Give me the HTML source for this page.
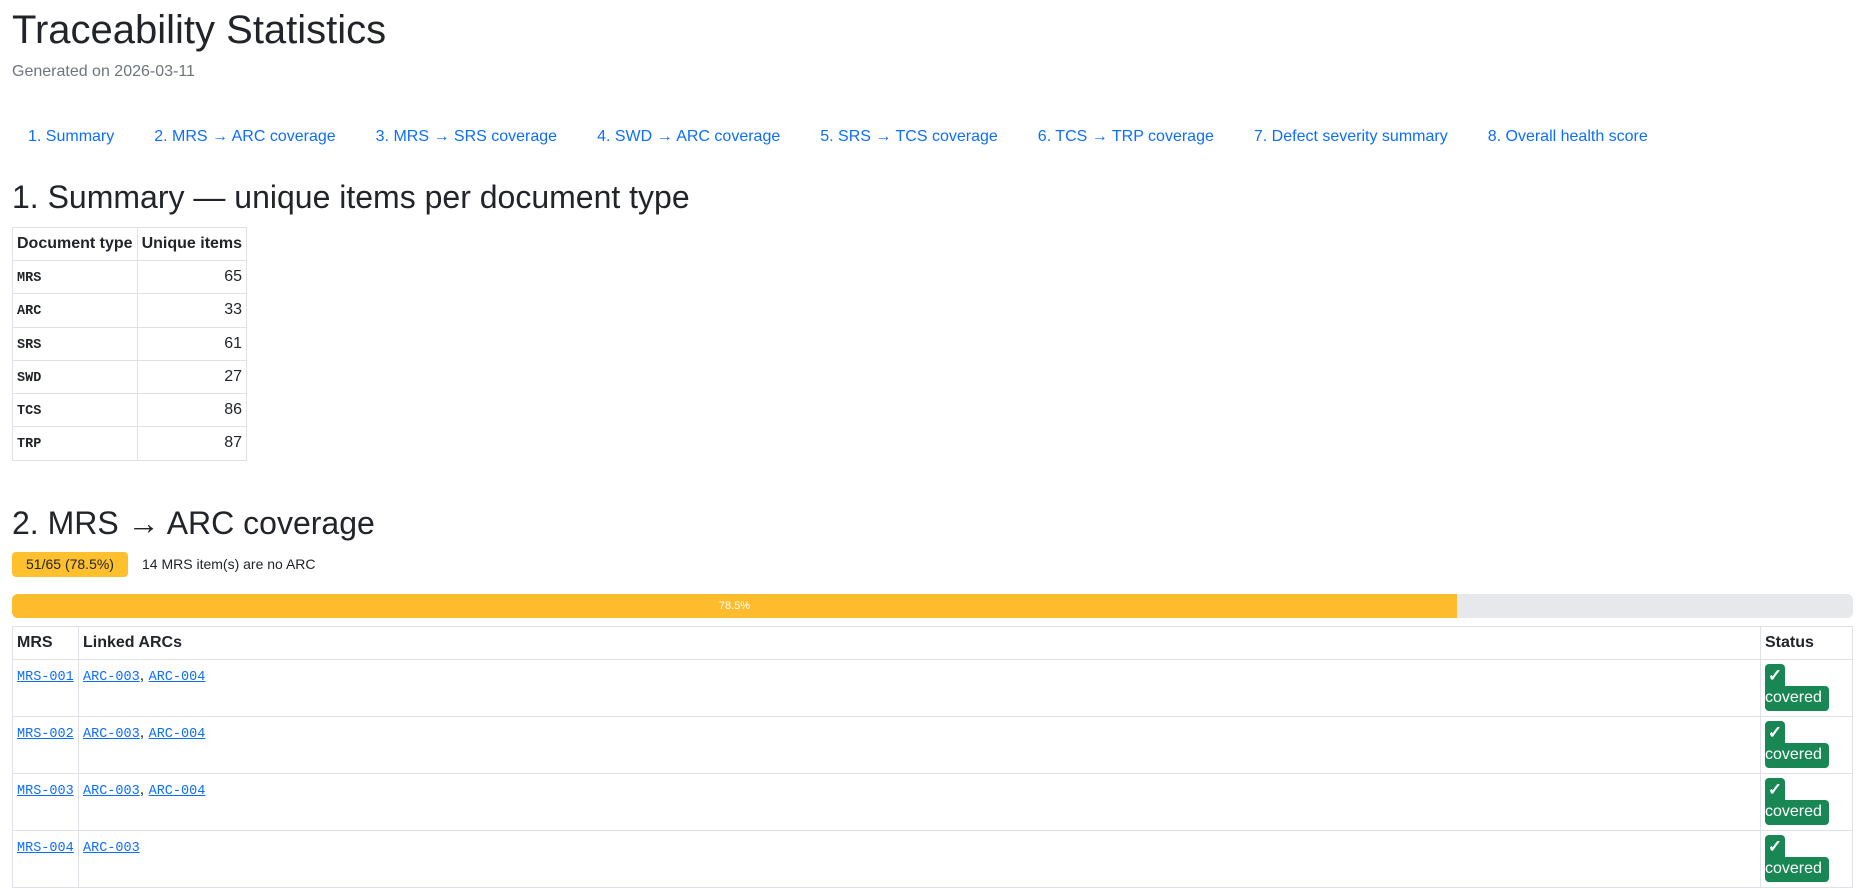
<!DOCTYPE html>
<html><head><meta charset="utf-8"><style>
*{box-sizing:border-box}
body{margin:0;font-family:"Liberation Sans",Helvetica,Arial,sans-serif;font-size:16px;color:#212529;background:#fff;line-height:1.5;overflow:hidden;width:1863px;height:875px}
h1{font-size:40px;font-weight:400;margin:0;position:absolute;top:6px;left:12px;line-height:48px}
.gen{position:absolute;top:60px;left:12px;color:#6c757d}
a{color:#0d6efd;text-decoration:none}
.nav{position:absolute;top:125px;left:12px;display:flex;white-space:nowrap}
.nav a{padding:0 24px 0 16px;line-height:24px}
h2{font-size:32px;font-weight:400;margin:0;line-height:38px;position:absolute;left:12px}
table{border-collapse:collapse;position:absolute;left:12px}
td,th{border:1px solid #dee2e6;padding:4px;text-align:left;vertical-align:top;white-space:nowrap}
code{font-family:"Liberation Mono",monospace;font-size:13.5px}
.t1 code{font-weight:bold;color:#212529}
.t1 td,.t1 th{height:33px}
.t1 th{height:31px}
.t2 td{height:57px}
.t2 th{height:33px}
.t2 a{text-decoration:underline}
.badge{position:absolute;left:12px;top:552px;width:116px;height:25px;background:#ffc02e;border-radius:4px;font-size:14px;line-height:25px;text-align:center}
.note{position:absolute;left:142px;top:552px;font-size:14px;line-height:25px}
.prog{position:absolute;left:12px;top:594px;width:1841px;height:24px;background:#e6e8eb;border-radius:6px;overflow:hidden}
.fill{width:1445px;height:24px;background:#fdbb2e;color:#fff;font-size:11px;text-align:center;line-height:24px}
.ck{display:block;width:20px;height:25px;background:#198754;color:#fff;border-radius:4px 4px 0 0;text-align:center;line-height:24px;font-size:17px;font-weight:bold}
.cv{display:block;width:64px;height:25px;background:#198754;color:#fff;border-radius:0 4px 4px 4px;line-height:24px;margin-top:-3px}
</style></head><body>
<h1>Traceability Statistics</h1>
<div class="gen">Generated on 2026-03-11</div>
<div class="nav"><a>1. Summary</a><a>2. MRS → ARC coverage</a><a>3. MRS → SRS coverage</a><a>4. SWD → ARC coverage</a><a>5. SRS → TCS coverage</a><a>6. TCS → TRP coverage</a><a>7. Defect severity summary</a><a>8. Overall health score</a></div>
<h2 style="top:178px">1. Summary — unique items per document type</h2>
<table class="t1" style="top:227px;width:235px">
<tr><th style="width:126px">Document type</th><th>Unique items</th></tr>
<tr><td><code>MRS</code></td><td style="text-align:right">65</td></tr>
<tr><td><code>ARC</code></td><td style="text-align:right">33</td></tr>
<tr><td><code>SRS</code></td><td style="text-align:right">61</td></tr>
<tr><td><code>SWD</code></td><td style="text-align:right">27</td></tr>
<tr><td><code>TCS</code></td><td style="text-align:right">86</td></tr>
<tr><td><code>TRP</code></td><td style="text-align:right">87</td></tr>
</table>
<h2 style="top:504px">2. MRS → ARC coverage</h2>
<div class="badge">51/65 (78.5%)</div>
<div class="note">14 MRS item(s) are no ARC</div>
<div class="prog"><div class="fill">78.5%</div></div>
<table class="t2" style="top:626px;width:1841px">
<tr><th style="width:66px">MRS</th><th>Linked ARCs</th><th style="width:92px">Status</th></tr>
<tr><td><a><code>MRS-001</code></a></td><td><a><code>ARC-003</code></a>, <a><code>ARC-004</code></a></td><td><span class="ck">✓</span><span class="cv">covered</span></td></tr>
<tr><td><a><code>MRS-002</code></a></td><td><a><code>ARC-003</code></a>, <a><code>ARC-004</code></a></td><td><span class="ck">✓</span><span class="cv">covered</span></td></tr>
<tr><td><a><code>MRS-003</code></a></td><td><a><code>ARC-003</code></a>, <a><code>ARC-004</code></a></td><td><span class="ck">✓</span><span class="cv">covered</span></td></tr>
<tr><td><a><code>MRS-004</code></a></td><td><a><code>ARC-003</code></a></td><td><span class="ck">✓</span><span class="cv">covered</span></td></tr>
</table>
</body></html>
